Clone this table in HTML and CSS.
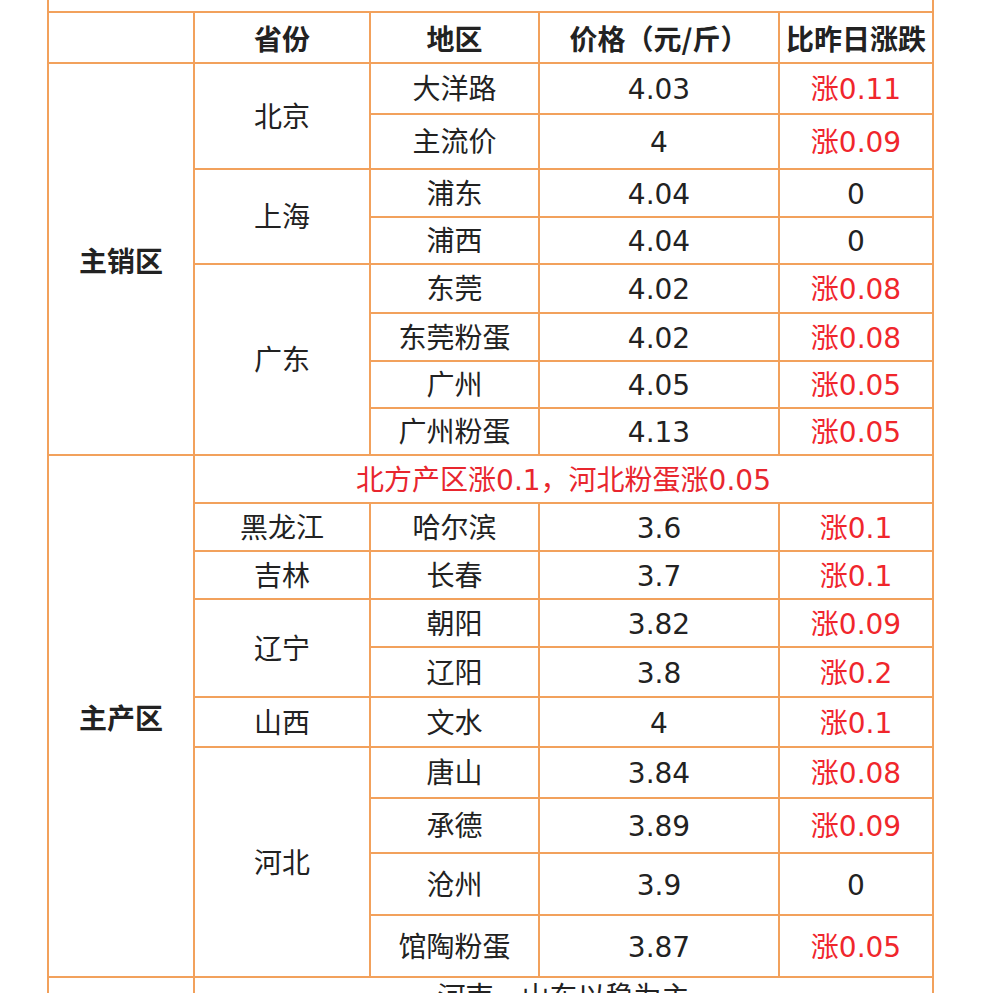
FILE: index.html
```html
<!DOCTYPE html>
<html lang="zh-CN">
<head>
<meta charset="utf-8">
<title>鸡蛋价格</title>
<link rel="stylesheet" href="styles.css">
</head>
<body>
<table class="price">
  <colgroup>
    <col class="c1"><col class="c2"><col class="c3"><col class="c4"><col class="c5">
  </colgroup>
  <tr class="rtop"><td colspan="5"></td></tr>
  <tr class="r51 head">
    <td></td><td>省份</td><td>地区</td><td>价格（元/斤）</td><td>比昨日涨跌</td>
  </tr>
  <tr class="r51">
    <td rowspan="8" class="zone">主销区</td>
    <td rowspan="2">北京</td><td>大洋路</td><td>4.03</td><td class="up">涨0.11</td>
  </tr>
  <tr class="r55"><td>主流价</td><td>4</td><td class="up">涨0.09</td></tr>
  <tr class="r48">
    <td rowspan="2">上海</td><td>浦东</td><td>4.04</td><td>0</td>
  </tr>
  <tr class="r47"><td>浦西</td><td>4.04</td><td>0</td></tr>
  <tr class="r49">
    <td rowspan="4">广东</td><td>东莞</td><td>4.02</td><td class="up">涨0.08</td>
  </tr>
  <tr class="r48"><td>东莞粉蛋</td><td>4.02</td><td class="up">涨0.08</td></tr>
  <tr class="r47"><td>广州</td><td>4.05</td><td class="up">涨0.05</td></tr>
  <tr class="r47"><td>广州粉蛋</td><td>4.13</td><td class="up">涨0.05</td></tr>
  <tr class="r48">
    <td rowspan="10" class="zone">主产区</td>
    <td colspan="4" class="note">北方产区涨0.1，河北粉蛋涨0.05</td>
  </tr>
  <tr class="r48"><td>黑龙江</td><td>哈尔滨</td><td>3.6</td><td class="up">涨0.1</td></tr>
  <tr class="r48"><td>吉林</td><td>长春</td><td>3.7</td><td class="up">涨0.1</td></tr>
  <tr class="r48">
    <td rowspan="2">辽宁</td><td>朝阳</td><td>3.82</td><td class="up">涨0.09</td>
  </tr>
  <tr class="r50"><td>辽阳</td><td>3.8</td><td class="up">涨0.2</td></tr>
  <tr class="r50"><td>山西</td><td>文水</td><td>4</td><td class="up">涨0.1</td></tr>
  <tr class="r51">
    <td rowspan="4">河北</td><td>唐山</td><td>3.84</td><td class="up">涨0.08</td>
  </tr>
  <tr class="r55"><td>承德</td><td>3.89</td><td class="up">涨0.09</td></tr>
  <tr class="r62"><td>沧州</td><td>3.9</td><td>0</td></tr>
  <tr class="r62"><td>馆陶粉蛋</td><td>3.87</td><td class="up">涨0.05</td></tr>
  <tr class="r60 last"><td></td><td colspan="4">河南、山东以稳为主</td></tr>
</table>
</body>
</html>
```
FILE: styles.css
```css
html, body {
  margin: 0;
  padding: 0;
  background: #ffffff;
  overflow: hidden;
}

body {
  font-family: "DejaVu Sans", "Noto Sans CJK SC", sans-serif;
  font-size: 28px;
  color: #222222;
}

.price {
  border-collapse: collapse;
  table-layout: fixed;
  width: 887px;
  margin-left: 47px;
  margin-top: -29px;
}

.c1 { width: 146px; }
.c2 { width: 176px; }
.c3 { width: 169px; }
.c4 { width: 240px; }
.c5 { width: 154px; }

.price td {
  border: 2px solid #f2a15c;
  padding: 3px 0 0;
  text-align: center;
  vertical-align: middle;
  line-height: 1.2;
  white-space: nowrap;
  overflow: hidden;
}

.rtop { height: 40px; }
.r47 { height: 47px; }
.r48 { height: 48px; }
.r49 { height: 49px; }
.r50 { height: 50px; }
.r51 { height: 51px; }
.r55 { height: 55px; }
.r60 { height: 60px; }
.r62 { height: 62px; }

.head td {
  font-family: "Noto Sans CJK SC", sans-serif;
  font-weight: 700;
}

.zone {
  font-family: "Noto Sans CJK SC", sans-serif;
  font-weight: 700;
}

.up {
  color: #f0262c;
}

.note {
  color: #e8262e;
}

.price .last td {
  vertical-align: top;
  padding-top: 3px;
}
```
